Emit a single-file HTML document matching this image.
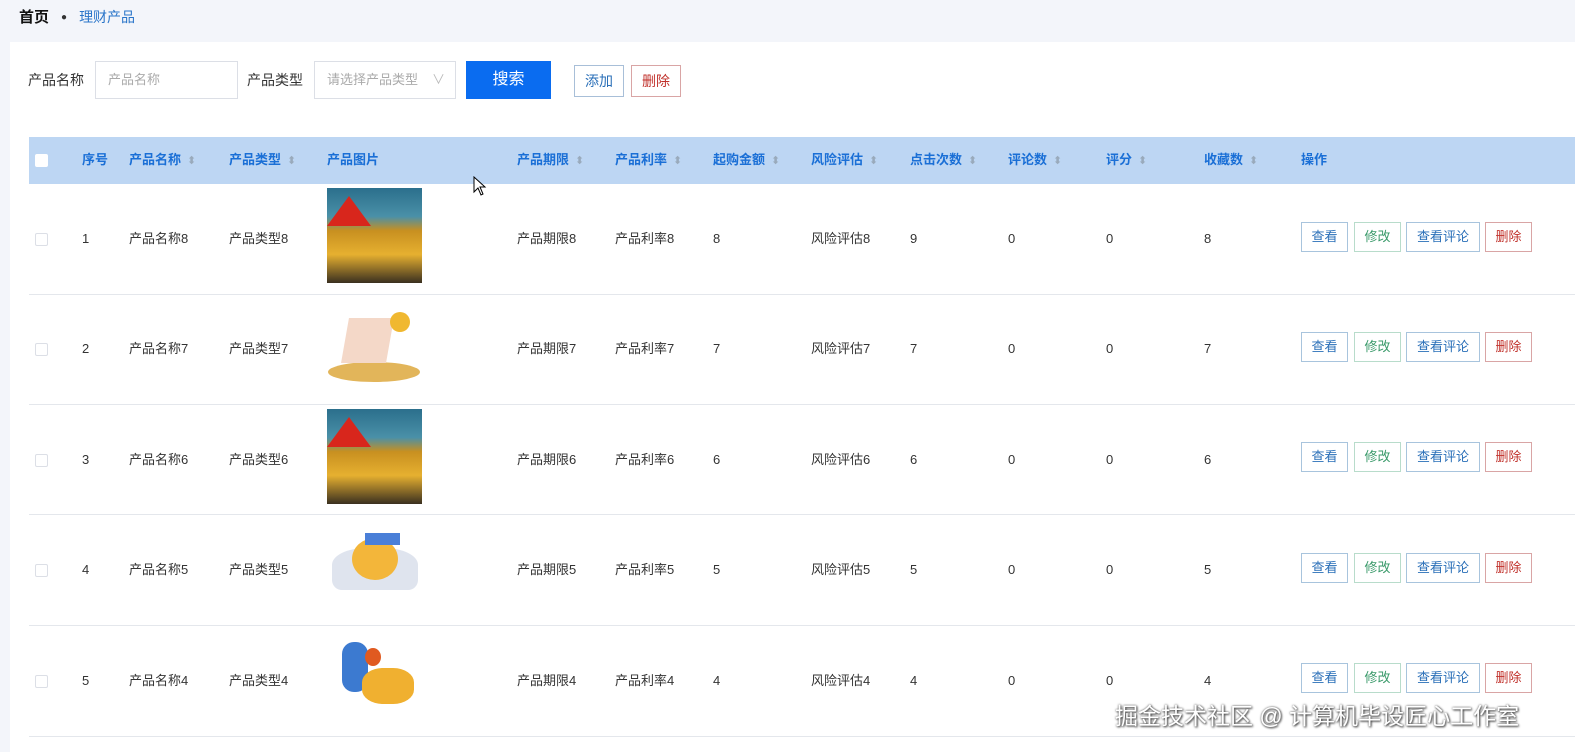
<!DOCTYPE html>
<html><head><meta charset="utf-8"><style>
*{margin:0;padding:0;box-sizing:border-box}
body{width:1575px;height:749px;overflow:hidden;background:#f3f5fa;font-family:"Liberation Sans","Noto Sans CJK SC",sans-serif;font-size:13px;color:#333;position:relative}
.bc{position:absolute;top:7px;left:19px;font-size:15px;line-height:20px}
.card{position:absolute;left:10px;top:42px;width:1565px;height:710px;background:#fff}
.a{position:absolute}
.inp{position:absolute;height:38px;border:1px solid #dcdfe6;background:#fff;color:#aaa;font-size:13px;line-height:36px;padding-left:12px}
.thead{position:absolute;left:29px;top:137px;width:1546px;height:47px;background:#bdd6f3}
.th{position:absolute;top:152px;line-height:16px;font-weight:bold;color:#1a6fd6;font-size:13px;margin-left:2px}
.sort{display:inline-block;margin-left:6px;color:#9ab;font-size:11px;font-weight:normal}
.row{position:absolute;left:29px;width:1546px;border-bottom:1px solid #e4e7ec}
.td{position:absolute;font-size:13px;color:#333;line-height:16px;margin-left:2px}
.cb{position:absolute;left:35px;width:13px;height:13px;border:1px solid #dcdfe6;background:#fff;border-radius:2px}
.btn{position:absolute;height:30px;border:1px solid;font-size:13px;line-height:28px;text-align:center;background:#fff;margin-left:2px}
.wm{position:absolute;left:1115px;top:697px;font-size:23px;color:#fff;text-shadow:0 0 2px #555,1px 1px 2px #333;white-space:nowrap}
</style></head><body>
<div class="bc"><b style="color:#111">首页</b><span style="margin:0 12px;font-size:10px;vertical-align:2px">●</span><span style="color:#2a75c9;font-size:14px">理财产品</span></div>
<div class="card"></div>
<div class="a" style="left:28px;top:71px;font-size:14px;line-height:18px">产品名称</div>
<div class="inp" style="left:95px;top:61px;width:143px">产品名称</div>
<div class="a" style="left:247px;top:71px;font-size:14px;line-height:18px">产品类型</div>
<div class="inp" style="left:314px;top:61px;width:142px">请选择产品类型 <span style="position:absolute;right:10px;color:#bbb">∨</span></div>
<div class="a" style="left:466px;top:61px;width:85px;height:38px;background:#0a6cf0;color:#fff;font-size:16px;text-align:center;line-height:38px">搜索</div>
<div class="btn" style="left:572px;top:65px;width:50px;height:32px;line-height:30px;border-color:#a8bfd8;color:#2a6fb8;font-size:14px">添加</div>
<div class="btn" style="left:629px;top:65px;width:50px;height:32px;line-height:30px;border-color:#d9a5a5;color:#c0302a;font-size:14px">删除</div>
<div class="thead"></div>
<div class="cb" style="top:154px;border-color:#fff"></div>
<div class="th" style="left:80px">序号</div>
<div class="th" style="left:127px">产品名称<span class="sort">⬍</span></div>
<div class="th" style="left:227px">产品类型<span class="sort">⬍</span></div>
<div class="th" style="left:325px">产品图片</div>
<div class="th" style="left:515px">产品期限<span class="sort">⬍</span></div>
<div class="th" style="left:613px">产品利率<span class="sort">⬍</span></div>
<div class="th" style="left:711px">起购金额<span class="sort">⬍</span></div>
<div class="th" style="left:809px">风险评估<span class="sort">⬍</span></div>
<div class="th" style="left:908px">点击次数<span class="sort">⬍</span></div>
<div class="th" style="left:1006px">评论数<span class="sort">⬍</span></div>
<div class="th" style="left:1104px">评分<span class="sort">⬍</span></div>
<div class="th" style="left:1202px">收藏数<span class="sort">⬍</span></div>
<div class="th" style="left:1299px">操作</div>

<div class="row" style="top:184px;height:111px"></div>
<div class="row" style="top:295px;height:110px"></div>
<div class="row" style="top:405px;height:110px"></div>
<div class="row" style="top:515px;height:111px"></div>
<div class="row" style="top:626px;height:111px"></div>

<div class="cb" style="top:233px"></div><div class="td" style="left:80px;top:231px">1</div><div class="td" style="left:127px;top:231px">产品名称8</div><div class="td" style="left:227px;top:231px">产品类型8</div>
<div class="a" style="left:327px;top:188px;width:95px;height:95px;background:linear-gradient(180deg,#2b6f8c 0,#4a90a8 30%,#c89020 45%,#e6b030 70%,#3a3020 100%)"><div class="a" style="left:0;top:8px;width:0;height:0;border-left:22px solid transparent;border-right:22px solid transparent;border-bottom:30px solid #d8261c"></div></div>
<div class="td" style="left:515px;top:231px">产品期限8</div><div class="td" style="left:613px;top:231px">产品利率8</div><div class="td" style="left:711px;top:231px">8</div><div class="td" style="left:809px;top:231px">风险评估8</div><div class="td" style="left:908px;top:231px">9</div><div class="td" style="left:1006px;top:231px">0</div><div class="td" style="left:1104px;top:231px">0</div><div class="td" style="left:1202px;top:231px">8</div>
<div class="btn" style="left:1299px;top:222px;width:47px;border-color:#a8c4dd;color:#2a6fb8">查看</div><div class="btn" style="left:1352px;top:222px;width:47px;border-color:#b8dccb;color:#3a9a6a">修改</div><div class="btn" style="left:1404px;top:222px;width:74px;border-color:#a8c4dd;color:#2a6fb8">查看评论</div><div class="btn" style="left:1483px;top:222px;width:47px;border-color:#d9a5a5;color:#c0302a">删除</div>

<div class="cb" style="top:343px"></div><div class="td" style="left:80px;top:341px">2</div><div class="td" style="left:127px;top:341px">产品名称7</div><div class="td" style="left:227px;top:341px">产品类型7</div>
<div class="a" style="left:328px;top:362px;width:92px;height:20px;border-radius:50%;background:#e2b55a"></div><div class="a" style="left:345px;top:318px;width:45px;height:45px;background:#f4d8c8;transform:skew(-10deg)"></div><div class="a" style="left:390px;top:312px;width:20px;height:20px;border-radius:50%;background:#f0b830"></div>
<div class="td" style="left:515px;top:341px">产品期限7</div><div class="td" style="left:613px;top:341px">产品利率7</div><div class="td" style="left:711px;top:341px">7</div><div class="td" style="left:809px;top:341px">风险评估7</div><div class="td" style="left:908px;top:341px">7</div><div class="td" style="left:1006px;top:341px">0</div><div class="td" style="left:1104px;top:341px">0</div><div class="td" style="left:1202px;top:341px">7</div>
<div class="btn" style="left:1299px;top:332px;width:47px;border-color:#a8c4dd;color:#2a6fb8">查看</div><div class="btn" style="left:1352px;top:332px;width:47px;border-color:#b8dccb;color:#3a9a6a">修改</div><div class="btn" style="left:1404px;top:332px;width:74px;border-color:#a8c4dd;color:#2a6fb8">查看评论</div><div class="btn" style="left:1483px;top:332px;width:47px;border-color:#d9a5a5;color:#c0302a">删除</div>

<div class="cb" style="top:454px"></div><div class="td" style="left:80px;top:452px">3</div><div class="td" style="left:127px;top:452px">产品名称6</div><div class="td" style="left:227px;top:452px">产品类型6</div>
<div class="a" style="left:327px;top:409px;width:95px;height:95px;background:linear-gradient(180deg,#2b6f8c 0,#4a90a8 30%,#c89020 45%,#e6b030 70%,#3a3020 100%)"><div class="a" style="left:0;top:8px;width:0;height:0;border-left:22px solid transparent;border-right:22px solid transparent;border-bottom:30px solid #d8261c"></div></div>
<div class="td" style="left:515px;top:452px">产品期限6</div><div class="td" style="left:613px;top:452px">产品利率6</div><div class="td" style="left:711px;top:452px">6</div><div class="td" style="left:809px;top:452px">风险评估6</div><div class="td" style="left:908px;top:452px">6</div><div class="td" style="left:1006px;top:452px">0</div><div class="td" style="left:1104px;top:452px">0</div><div class="td" style="left:1202px;top:452px">6</div>
<div class="btn" style="left:1299px;top:442px;width:47px;border-color:#a8c4dd;color:#2a6fb8">查看</div><div class="btn" style="left:1352px;top:442px;width:47px;border-color:#b8dccb;color:#3a9a6a">修改</div><div class="btn" style="left:1404px;top:442px;width:74px;border-color:#a8c4dd;color:#2a6fb8">查看评论</div><div class="btn" style="left:1483px;top:442px;width:47px;border-color:#d9a5a5;color:#c0302a">删除</div>

<div class="cb" style="top:564px"></div><div class="td" style="left:80px;top:562px">4</div><div class="td" style="left:127px;top:562px">产品名称5</div><div class="td" style="left:227px;top:562px">产品类型5</div>
<div class="a" style="left:332px;top:548px;width:86px;height:42px;border-radius:40% 40% 10px 10px;background:#dfe4ee"></div><div class="a" style="left:352px;top:538px;width:46px;height:42px;border-radius:50%;background:#f3b63a"></div><div class="a" style="left:365px;top:533px;width:35px;height:12px;background:#4a7fd8"></div>
<div class="td" style="left:515px;top:562px">产品期限5</div><div class="td" style="left:613px;top:562px">产品利率5</div><div class="td" style="left:711px;top:562px">5</div><div class="td" style="left:809px;top:562px">风险评估5</div><div class="td" style="left:908px;top:562px">5</div><div class="td" style="left:1006px;top:562px">0</div><div class="td" style="left:1104px;top:562px">0</div><div class="td" style="left:1202px;top:562px">5</div>
<div class="btn" style="left:1299px;top:553px;width:47px;border-color:#a8c4dd;color:#2a6fb8">查看</div><div class="btn" style="left:1352px;top:553px;width:47px;border-color:#b8dccb;color:#3a9a6a">修改</div><div class="btn" style="left:1404px;top:553px;width:74px;border-color:#a8c4dd;color:#2a6fb8">查看评论</div><div class="btn" style="left:1483px;top:553px;width:47px;border-color:#d9a5a5;color:#c0302a">删除</div>

<div class="cb" style="top:675px"></div><div class="td" style="left:80px;top:673px">5</div><div class="td" style="left:127px;top:673px">产品名称4</div><div class="td" style="left:227px;top:673px">产品类型4</div>
<div class="a" style="left:342px;top:642px;width:26px;height:50px;border-radius:12px;background:#3c7ad0"></div><div class="a" style="left:362px;top:668px;width:52px;height:36px;border-radius:40%;background:#f0b030"></div><div class="a" style="left:365px;top:648px;width:16px;height:18px;border-radius:50%;background:#e05a20"></div>
<div class="td" style="left:515px;top:673px">产品期限4</div><div class="td" style="left:613px;top:673px">产品利率4</div><div class="td" style="left:711px;top:673px">4</div><div class="td" style="left:809px;top:673px">风险评估4</div><div class="td" style="left:908px;top:673px">4</div><div class="td" style="left:1006px;top:673px">0</div><div class="td" style="left:1104px;top:673px">0</div><div class="td" style="left:1202px;top:673px">4</div>
<div class="btn" style="left:1299px;top:663px;width:47px;border-color:#a8c4dd;color:#2a6fb8">查看</div><div class="btn" style="left:1352px;top:663px;width:47px;border-color:#b8dccb;color:#3a9a6a">修改</div><div class="btn" style="left:1404px;top:663px;width:74px;border-color:#a8c4dd;color:#2a6fb8">查看评论</div><div class="btn" style="left:1483px;top:663px;width:47px;border-color:#d9a5a5;color:#c0302a">删除</div>

<svg class="a" style="left:473px;top:176px" width="14" height="20" viewBox="0 0 14 20"><path d="M1 1 L1 16 L5 12 L8 19 L10 18 L7 11 L12 11 Z" fill="#fff" stroke="#000" stroke-width="1"/></svg>
<div class="wm">掘金技术社区 @ 计算机毕设匠心工作室</div>
</body></html>
